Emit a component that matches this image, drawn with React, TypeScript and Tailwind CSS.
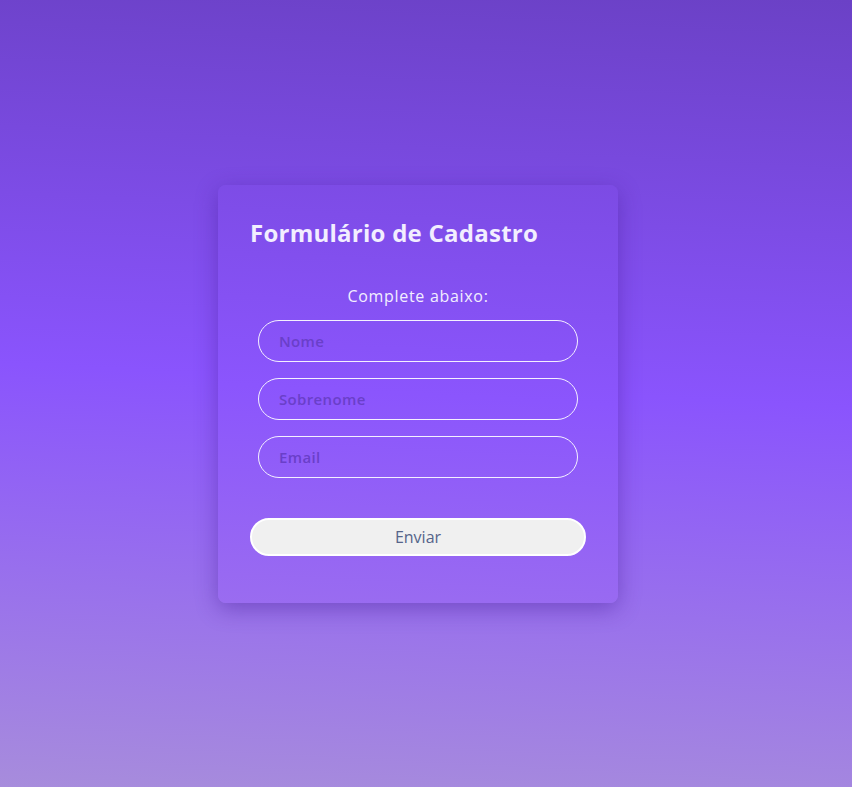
import React from 'react';

const fields = ['Nome', 'Sobrenome', 'Email'];

const App: React.FC = () => {
  return (
    <div
      className="flex min-h-screen h-[787px] w-full items-center justify-center pr-4 bg-[linear-gradient(183deg,#6b41c6_0%,#8a54fd_49%,#a78cdc_100%)]"
      style={{ fontFamily: '"Open Sans", "Noto Sans", sans-serif' }}
    >
      <div className="w-[400px] h-[418px] rounded-lg px-8 pt-8 shadow-[0_6px_22px_rgba(70,30,150,0.45)] bg-[linear-gradient(183deg,#7c4be4_0%,#8b55fd_50%,#9a6cf0_100%)]">
        <h1 className="text-[24px] leading-8 font-bold text-[#f2eeff] tracking-[0.25px]">
          Formulário de Cadastro
        </h1>

        <form className="mt-[35px] flex flex-col items-center" onSubmit={e => e.preventDefault()}>
          <p className="text-[16px] leading-6 text-[#f2eeff] tracking-[0.7px]">Complete abaixo:</p>

          <div className="mt-[12px] flex flex-col gap-4">
            {fields.map(field => (
              <input
                key={field}
                type="text"
                placeholder={field}
                className="w-[320px] h-[42px] rounded-full border border-[#f4f0ff] bg-transparent px-5 text-[15px] font-semibold text-white outline-none placeholder:text-[#6a3fc9] tracking-[0.35px]"
              />
            ))}
          </div>

          <button
            type="submit"
            className="mt-[40px] w-[336px] h-[38px] rounded-full border-2 border-white bg-[#f0f0f0] text-[16px] text-[#55648a]"
          >
            Enviar
          </button>
        </form>
      </div>
    </div>
  );
};

export default App;
